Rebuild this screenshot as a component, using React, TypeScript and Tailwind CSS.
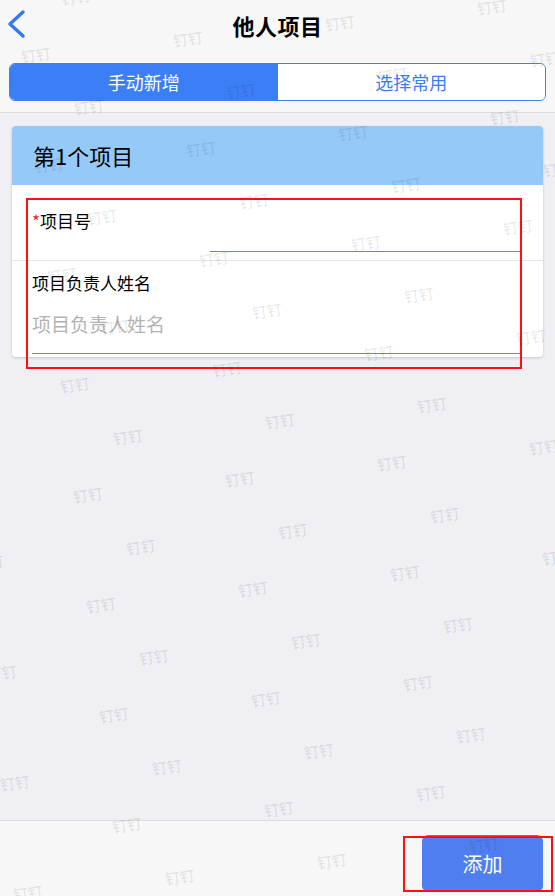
import type { CSSProperties } from 'react'

type Mark = { key: string; style: CSSProperties }

// watermark grid: two marks per tile, tiles laid on a slightly tilted lattice
function buildMarks(): Mark[] {
  const marks: Mark[] = []
  for (let m = -3; m <= 4; m++) {
    for (let n = -4; n <= 5; n++) {
      const bx = 75 + 152 * m + 13 * n
      const by = 385 - 16 * m + 110 * n
      const points = [
        [bx, by],
        [bx + 53, by + 52],
      ]
      points.forEach(([x, y], i) => {
        if (x < -30 || x > 590 || y < -20 || y > 915) return
        marks.push({
          key: `${m}-${n}-${i}`,
          style: { left: x - 15, top: y - 10 },
        })
      })
    }
  }
  return marks
}

const marks = buildMarks()

function BackIcon() {
  return (
    <svg width="22" height="30" viewBox="0 0 22 30" fill="none">
      <polyline points="17,3 4,15 17,27" stroke="#3478f6" strokeWidth="3.4" strokeLinecap="round" strokeLinejoin="round" />
    </svg>
  )
}

export default function App() {
  return (
    <div className="relative flex h-[896px] w-[555px] flex-col overflow-hidden bg-[#efeff4] font-['Noto_Sans_CJK_SC',sans-serif] text-black">
      <header className="flex h-[113px] flex-col border-b border-[#dcdcdc] bg-[#f7f7f7]">
        <div className="relative flex h-[50px] items-center justify-center">
          <button className="absolute left-[6px] top-[9px]" type="button">
            <BackIcon />
          </button>
          <h1 className="text-[22px] font-semibold leading-none tracking-[0.5px]">他人项目</h1>
        </div>
        <div className="mx-[9px] mt-[13px] flex h-[38px] overflow-hidden rounded-[6px] border-[1.5px] border-[#3b7ef6] text-[18px]">
          <button className="flex flex-1 items-center justify-center bg-[#3b7ef6] text-white" type="button">
            手动新增
          </button>
          <button className="flex flex-1 items-center justify-center bg-white text-[#3b7ef6]" type="button">
            选择常用
          </button>
        </div>
      </header>

      <main className="flex-1 px-[12px] pt-[13px]">
        <section className="overflow-hidden rounded-[4px] bg-white shadow-[0_1px_3px_rgba(0,0,0,0.18)]">
          <div className="flex h-[59px] items-center bg-[#95c9f8] px-[21px] pb-[2px] text-[22px] leading-none">第1个项目</div>
          <div className="border-b border-[#e6e6e6] pb-[8px] pl-[20px] pr-[22px] pt-[23px]">
            <p className="text-[17px] leading-[26px]">
              <span className="text-[#f5222d]">*</span>项目号
            </p>
            <div className="ml-auto h-[18px] w-[311px] border-b border-[#7b7fd2]" />
          </div>
          <div className="pb-[3px] pl-[20px] pr-[22px] pt-[9px]">
            <p className="text-[17px] leading-[26px]">项目负责人姓名</p>
            <div className="mt-[14px] border-b border-[#7b7fd2] pb-[15px] text-[19px] leading-[28px] text-[#b3b3b3]">项目负责人姓名</div>
          </div>
        </section>
      </main>

      <footer className="flex h-[76px] justify-end border-t border-[#dcdcdc] bg-[#f7f7f7] pr-[12px] pt-[14px]">
        <button className="h-[57px] w-[121px] rounded-[6px] bg-[#4f7ef0] text-[20px] text-white" type="button">
          添加
        </button>
      </footer>

      {/* annotation boxes */}
      <div className="pointer-events-none absolute left-[26px] top-[198px] h-[171px] w-[496px] border-2 border-[#ff1010]" />
      <div className="pointer-events-none absolute left-[403px] top-[836px] h-[56px] w-[150px] border-2 border-[#ff1010]" />

      {marks.map((mark) => (
        <span
          key={mark.key}
          className="pointer-events-none absolute z-10 -rotate-[8deg] select-none whitespace-nowrap text-[15px] leading-[20px] text-black/[0.11]"
          style={mark.style}
        >
          钉钉
        </span>
      ))}
    </div>
  )
}
